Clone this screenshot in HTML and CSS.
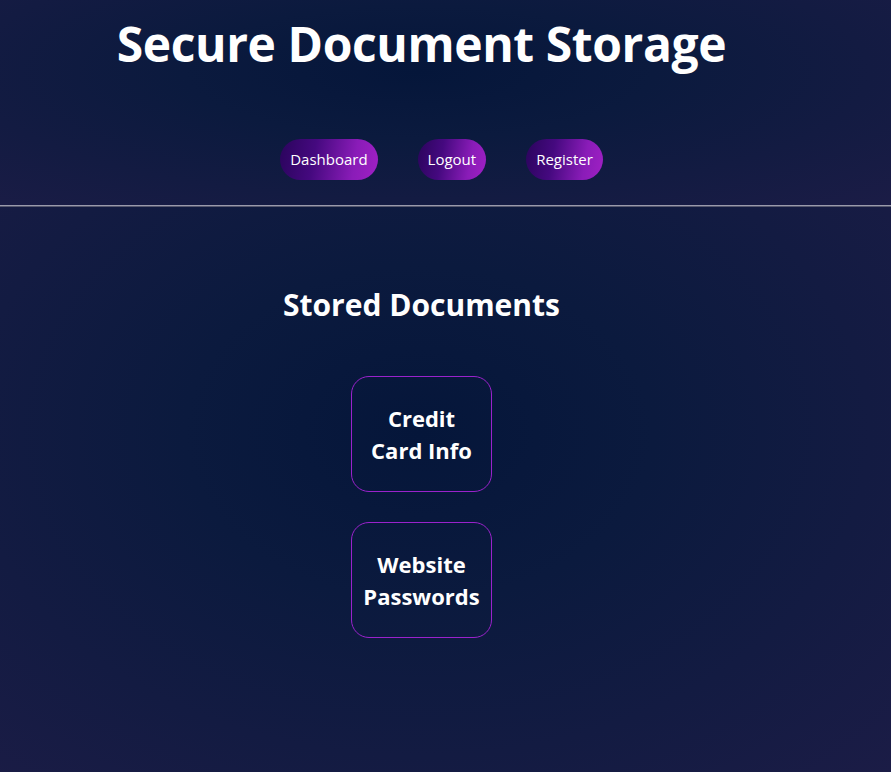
FILE: index.html
```html
<!DOCTYPE html>
<html lang="en">
<head>
<meta charset="utf-8">
<title>Secure Document Storage</title>
<link rel="stylesheet" href="styles.css">
</head>
<body>
<header class="site-header">
  <h1 class="title">Secure Document Storage</h1>
  <nav>
    <ul class="nav-list">
      <li><a class="nav-btn" href="#">Dashboard</a></li>
      <li><a class="nav-btn" href="#">Logout</a></li>
      <li><a class="nav-btn" href="#">Register</a></li>
    </ul>
  </nav>
</header>
<hr class="divider">
<main class="content">
  <h2 class="section-title">Stored Documents</h2>
  <div class="doc-list">
    <div class="doc-card"><h3 class="doc-name">Credit Card Info</h3></div>
    <div class="doc-card"><h3 class="doc-name">Website Passwords</h3></div>
  </div>
</main>
</body>
</html>
```
FILE: styles.css
```css
html, body {
  margin: 0;
  padding: 0;
}
body {
  min-height: 100vh;
  background: #15183f;
  color: #ffffff;
  font-family: "Open Sans", "Noto Sans", sans-serif;
  display: flex;
  flex-direction: column;
}
.site-header {
  padding: 13px 48px 0 0;
  height: 205px;
  box-sizing: border-box;
  background: radial-gradient(ellipse at 47% 35%, #05163a 0%, #0b1a3e 35%, #1b1c46 100%);
}
.title {
  margin: 0;
  text-align: center;
  font-size: 48px;
  line-height: 62px;
  font-weight: 700;
  letter-spacing: -0.4px;
}
.nav-list {
  list-style: none;
  margin: 64px 0 0 0;
  padding: 0 0 0 40px;
  display: flex;
  justify-content: center;
}
.nav-list li {
  margin: 0 20px;
}
.nav-btn {
  display: block;
  padding: 10px 10px;
  border-radius: 21px;
  font-size: 15px;
  line-height: 21px;
  color: #ffffff;
  text-decoration: none;
  background: linear-gradient(100deg, #2a045c 0%, #45097f 35%, #8a1cb8 75%, #a020c4 100%);
}
.divider {
  margin: 0;
  border: none;
  border-top: 1px solid #9a9aac;
  border-bottom: 1px solid #55576e;
  height: 0;
}
.content {
  flex: 1;
  padding: 0 48px 40px 0;
  text-align: center;
  background: radial-gradient(ellipse at 47% 40%, #05163a 0%, #0b1a3e 35%, #1b1c46 100%);
}
.section-title {
  margin: 78px 0 51px 0;
  font-size: 30px;
  line-height: 40px;
  font-weight: 700;
}
.doc-list {
  display: flex;
  flex-direction: column;
  align-items: center;
  gap: 30px;
}
.doc-card {
  width: 119px;
  padding: 25px 10px;
  border: 1px solid #9a22cc;
  border-radius: 18px;
}
.doc-name {
  margin: 0;
  font-size: 22px;
  line-height: 32px;
  font-weight: 700;
}
```
